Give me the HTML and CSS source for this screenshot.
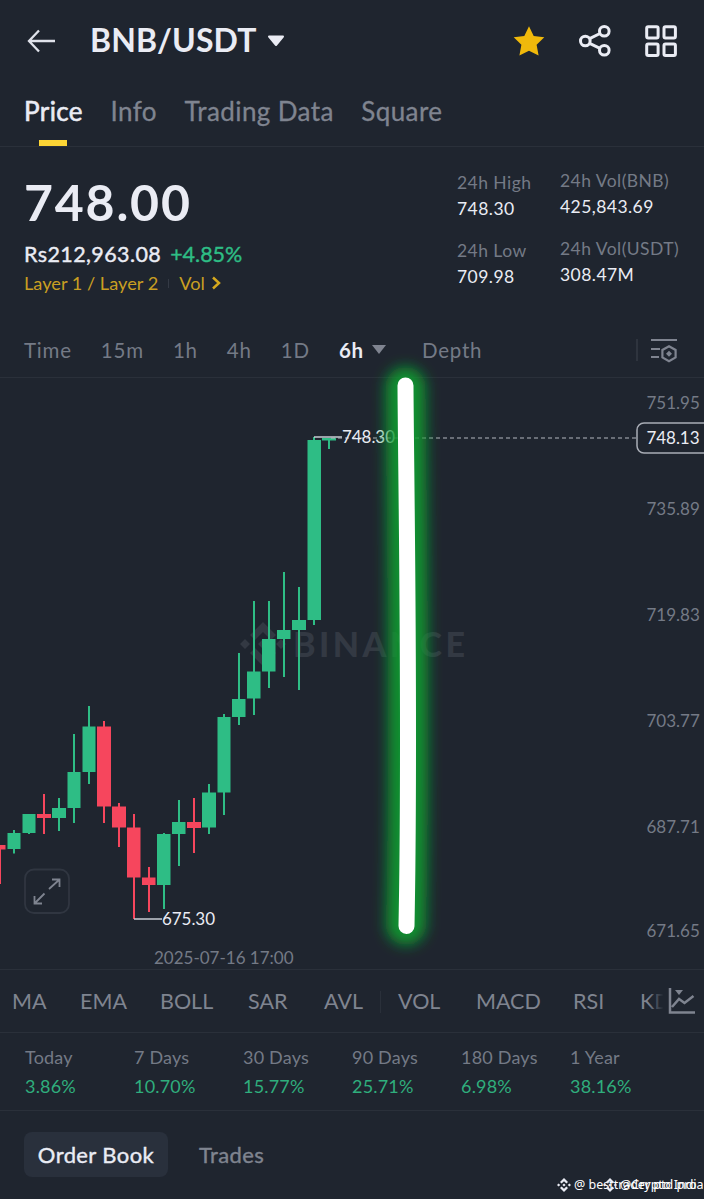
FILE: index.html
```html
<!DOCTYPE html>
<html lang="en">
<head>
  <meta charset="UTF-8" />
  <meta name="viewport" content="width=device-width, initial-scale=1" />
  <title>BNB/USDT</title>
  <link rel="stylesheet" href="styles.css">
</head>
<body>
  <div class="app">
    <header class="topbar">
      <svg class="back" width="30" height="26" viewBox="0 0 30 26"><path d="M29 13H3M13 2.500L3 13l10 10.500" /></svg>
      <h1 class="pair">BNB/USDT</h1>
      <svg class="caret" width="18" height="12" viewBox="0 0 18 12"><path d="M2 1.500h14L9 10z" /></svg>
      <div class="actions">
        <svg width="34" height="34" viewBox="0 0 34 34"><path class="star" d="M17 2.200l4.700 9.700 10.600 1.300-7.700 7.500 2 10.800L17 26.700l-9.600 4.800 2-10.800-7.700-7.500 10.600-1.300z" /></svg>
        <svg class="line-icon" width="34" height="34" viewBox="0 0 34 34"><circle cx="7.300" cy="17" r="4.800" /><circle cx="26.300" cy="7.300" r="4.800" /><circle cx="26.300" cy="26.300" r="4.800" /><path d="M11.600 14.700L22 9.500M11.600 19.300L22 24.300" /></svg>
        <svg class="line-icon" width="34" height="34" viewBox="0 0 34 34"><rect x="2.700" y="2.700" width="11.400" height="11.400" rx="1.500" /><rect x="20" y="2.700" width="11.400" height="11.400" rx="1.500" /><rect x="2.700" y="20" width="11.400" height="11.400" rx="1.500" /><rect x="20" y="20" width="11.400" height="11.400" rx="1.500" /></svg>
      </div>
    </header>

    <nav class="tabs">
      <a class="tab active">Price</a>
      <a class="tab">Info</a>
      <a class="tab">Trading Data</a>
      <a class="tab">Square</a>
    </nav>

    <section class="summary">
      <div class="quote">
        <div class="last-price">748.00</div>
        <div class="fiat"><span class="fiat-value">Rs212,963.08</span><span class="up">+4.85%</span></div>
        <div class="tags">
          <span>Layer 1 / Layer 2</span><i></i><span>Vol</span>
          <svg width="10" height="16" viewBox="0 0 10 16"><path d="M2 2.500L8 8l-6 5.500" /></svg>
        </div>
      </div>
      <dl class="stats high-low">
        <dt>24h High</dt><dd>748.30</dd>
        <dt>24h Low</dt><dd>709.98</dd>
      </dl>
      <dl class="stats volume">
        <dt>24h Vol(BNB)</dt><dd>425,843.69</dd>
        <dt>24h Vol(USDT)</dt><dd>308.47M</dd>
      </dl>
    </section>

    <nav class="intervals">
      <span>Time</span><span>15m</span><span>1h</span><span>4h</span><span>1D</span>
      <span class="selected">6h <svg width="14" height="10" viewBox="0 0 14 10"><path d="M0 0h14L7 9z" /></svg></span>
      <span class="depth">Depth</span>
      <svg class="settings" width="42" height="28" viewBox="0 0 42 28">
        <path class="rule" d="M1 3v22" />
        <path d="M15 4h26M15 13h9M15 21h8" />
        <path d="M33 10.200l6.600 3.800v7.400L33 25.200l-6.600-3.800V14z" />
        <path class="dot" d="M33 14.700l3 3-3 3-3-3z" />
      </svg>
    </nav>

    <section class="chart">
      <svg width="704" height="592" viewBox="0 378 704 592">
        <defs>
          <filter id="glow" x="350" y="330" width="112" height="660" filterUnits="userSpaceOnUse"><feGaussianBlur stdDeviation="7" /></filter>
        </defs>

        <g class="watermark">
          <path d="M263 622l13 13-5 5-8-8-8 8-5-5zM263 666l13-13-5-5-8 8-8-8-5 5zM245 639l5 5-5 5-5-5zM263 639l5 5-5 5-5-5zM281 639l5 5-5 5-5-5z" />
          <text x="293" y="656.500" textLength="172">BINANCE</text>
        </g>

        <g class="down">
          <path class="wick" d="M0 847v37M44 794v40M104 721v102M119 803v44M134 814v105M149 867v45M194 798v55" />
          <path d="M0 845h5.500v4.500H0zM37 814h14v4H37zM97 726.500h14v80H97zM112 806.500h14v21h-14zM127 827.500h13.500v50H127zM142 877.500h13.500v7.500H142zM187 822h14v6h-14z" />
        </g>
        <g class="rise">
          <path class="wick" d="M14 830v23.500M29 814v20M59 798v33M74 734v89M89 706v78M164 833v76M179 800v66M209 784v50M224 714v101M239 653v72M254 601v114M269 601v87M284 572v105M299 587v103M314 437v188M329 438v11" />
          <path d="M7.500 833h13v16h-13zM22.500 814h13v19h-13zM52 808h14v10H52zM67.500 772h13v36h-13zM82.500 726.500h13V772h-13zM157 834h13.500v51H157zM172 822h13.500v12H172zM202 792.500h14v35h-14zM217.500 717h13v75.500h-13zM232 699h13.500v18H232zM247 671.500h13.500v27H247zM262 639h13.500v32.500H262zM277 630h13.500v9H277zM292 620h14v10h-14zM307.500 440h13.500v180h-13.500zM322 438h14v2.500h-14z" />
        </g>

        <path class="leader" d="M314 437h28M134 919h28" />
        <path class="dash" d="M331 438H637" />
        <text class="mark" x="342" y="442.500" textLength="53">748.30</text>
        <text class="mark" x="162" y="924.500" textLength="53">675.30</text>

        <g class="axis">
          <text x="646.500" y="409">751.95</text>
          <text x="646.500" y="515">735.89</text>
          <text x="646.500" y="621">719.83</text>
          <text x="646.500" y="727">703.77</text>
          <text x="646.500" y="833">687.71</text>
          <text x="646.500" y="937">671.65</text>
          <text x="154" y="963.500">2025-07-16 17:00</text>
        </g>
        <rect class="price-box" x="637" y="423" width="80" height="30" rx="7" />
        <text class="mark" x="646.500" y="444" textLength="53">748.13</text>

        <g class="expand">
          <rect x="25" y="869.500" width="44" height="43.500" rx="9" />
          <path d="M49 889l10.500-9.500M52 879.500h7.500v7.500M44.500 893.500L34.500 903.500M34.500 896v7.500h7.500" />
        </g>

        <path class="beam-glow" d="M405.500 387C406 480 411 720 406 925" filter="url(#glow)" />
        <path class="beam" d="M405.500 385.500C406 480 410.500 720 406.500 926" />
      </svg>
    </section>

    <nav class="indicators">
      <span>MA</span><span>EMA</span><span>BOLL</span><span>SAR</span><span>AVL</span>
      <span class="sub">VOL</span><span>MACD</span><span>RSI</span><span class="cut">KD</span>
      <svg width="28" height="28" viewBox="0 0 28 28"><path d="M2 1v24.500h25M4 20l7-8 5.500 4L25.500 9" /><path class="solid" d="M7 3h8l-4 5z" /></svg>
    </nav>

    <section class="periods">
      <div>Today<b>3.86%</b></div>
      <div>7 Days<b>10.70%</b></div>
      <div>30 Days<b>15.77%</b></div>
      <div>90 Days<b>25.71%</b></div>
      <div>180 Days<b>6.98%</b></div>
      <div>1 Year<b>38.16%</b></div>
    </section>

    <footer class="bottom">
      <span class="book">Order Book</span>
      <span class="trades">Trades</span>
      <div class="credit first">
        <svg width="14" height="14" viewBox="0 0 14 14"><path d="M7 0l4 4-1.600 1.600L7 3.200 4.600 5.600 3 4zM7 14l4-4-1.600-1.600L7 10.800 4.600 8.400 3 10zM1.600 5.400L3.200 7 1.600 8.600 0 7zM7 5.400L8.600 7 7 8.600 5.400 7zM12.400 5.400L14 7l-1.600 1.600L10.800 7z" /></svg>
        <span>@ besttrader ptd pro</span>
      </div>
      <div class="credit second">
        <svg width="14" height="14" viewBox="0 0 14 14"><path d="M7 0l4 4-1.600 1.600L7 3.200 4.600 5.600 3 4zM7 14l4-4-1.600-1.600L7 10.800 4.600 8.400 3 10zM1.600 5.400L3.200 7 1.600 8.600 0 7zM7 5.400L8.600 7 7 8.600 5.400 7zM12.400 5.400L14 7l-1.600 1.600L10.800 7z" /></svg>
        <span>@Crypto India</span>
      </div>
    </footer>
  </div>
</body>
</html>
```
FILE: styles.css
```css
* {
  box-sizing: border-box;
}
body {
  margin: 0;
  background: #1f252f;
  color: #eaecf4;
  font-family: Lato, "Liberation Sans", sans-serif;
}
svg {
  display: block;
  flex: none;
}
.app {
  width: 704px;
  height: 1199px;
  overflow: hidden;
}

/* header */
.topbar {
  height: 82px;
  display: flex;
  align-items: center;
  padding: 0 26px 0 26px;
}
.back path {
  fill: none;
  stroke: #dfe2ea;
  stroke-width: 2.3;
}
.pair {
  margin: -2px 0 0 34px;
  font-size: 32px;
  line-height: 40px;
  font-weight: bold;
  letter-spacing: 0.1px;
}
.caret {
  margin-left: 10px;
  fill: #eaecf4;
  stroke: #eaecf4;
  stroke-width: 2;
  stroke-linejoin: round;
}
.actions {
  margin-left: auto;
  display: flex;
  gap: 32px;
}
.star {
  fill: #f0b90b;
}
.line-icon {
  fill: none;
  stroke: #eaecf4;
  stroke-width: 3;
}

.tabs {
  height: 65px;
  display: flex;
  gap: 27.5px;
  padding: 11px 24px 0;
  border-bottom: 1px solid #2a303a;
  font-size: 26px;
  line-height: 36px;
  letter-spacing: 0.4px;
  color: #7f8490;
  -webkit-text-stroke: 0.3px;
}
.tab.active {
  color: #eaecf4;
  -webkit-text-stroke: 0.6px;
}
.tab.active::after {
  content: "";
  display: block;
  width: 28px;
  height: 6px;
  margin: 11px auto 0;
  background: #fcd535;
}

/* price block */
.summary {
  height: 176px;
  display: grid;
  grid-template-columns: 433px 103px 1fr;
  padding-left: 24px;
}
.last-price {
  margin-top: 25px;
  font-size: 50px;
  line-height: 60px;
  font-weight: bold;
  letter-spacing: 1.8px;
}
.fiat {
  display: flex;
  gap: 9px;
  margin-top: 8px;
  font-size: 21.5px;
  line-height: 28px;
  -webkit-text-stroke: 0.4px;
}
.fiat-value {
  letter-spacing: 0.4px;
}
.up {
  color: #2ebd85;
}
.tags {
  display: flex;
  align-items: center;
  margin-top: 2px;
  font-size: 18.2px;
  line-height: 26px;
  color: #c99f22;
}
.tags i {
  width: 1px;
  height: 9px;
  margin: 0 10px;
  background: #343a45;
}
.tags path {
  fill: none;
  stroke: #d5a81d;
  stroke-width: 2.5;
}
.tags svg {
  margin-left: 6px;
}
.stats {
  margin: 0;
  padding-top: 23px;
  font-size: 17.5px;
  line-height: 26px;
  letter-spacing: 0.45px;
}
.stats.volume {
  padding-top: 21px;
}
.stats dt {
  color: #747a86;
}
.stats dd {
  margin: 0 0 15.5px;
}

.intervals {
  height: 55px;
  display: flex;
  align-items: center;
  gap: 29px;
  padding: 0 26px 0 24px;
  border-bottom: 1px solid #2a303a;
  font-size: 20.5px;
  letter-spacing: 0.8px;
  color: #747a86;
}
.selected {
  display: flex;
  align-items: center;
  gap: 8px;
  color: #eaecf4;
  font-weight: bold;
}
.selected svg {
  fill: #7f8490;
}
.depth {
  margin-left: 7px;
}
.settings {
  margin-left: auto;
  fill: none;
  stroke: #7f8490;
  stroke-width: 2.2;
}
.settings .rule {
  stroke: #343a45;
  stroke-width: 1.5;
}
.settings .dot {
  fill: #7f8490;
  stroke: none;
}

/* candles */
.chart {
  position: relative;
  height: 592px;
  border-bottom: 1px solid #2a303a;
}
.chart svg {
  overflow: visible;
}
.watermark {
  fill: #333943;
}
.watermark text {
  font-size: 34px;
  font-weight: 900;
}
.down {
  fill: #f6465d;
  stroke: #f6465d;
  stroke-width: 0;
}
.rise {
  fill: #2ebd85;
  stroke: #2ebd85;
  stroke-width: 0;
}
.wick {
  stroke-width: 2;
}
.leader {
  fill: none;
  stroke: #c8cbd3;
  stroke-width: 1.5;
}
.dash {
  stroke: #b4b8c0;
  stroke-width: 1.2;
  stroke-dasharray: 4 3;
}
.mark {
  font-size: 17px;
  fill: #eaecf4;
}
.axis {
  font-size: 17px;
  fill: #747a86;
}
.price-box {
  fill: #1f252f;
  stroke: #a9adb6;
  stroke-width: 1.5;
}
.expand {
  fill: none;
  stroke: #7f8490;
  stroke-width: 1.8;
}
.expand rect {
  stroke: #303641;
}
.beam-glow {
  fill: none;
  stroke: #0d9a2f;
  stroke-opacity: 0.92;
  stroke-width: 40;
  stroke-linecap: round;
}
.beam {
  fill: none;
  stroke: #fff;
  stroke-width: 16;
  stroke-linecap: round;
}

.indicators {
  height: 63px;
  display: grid;
  grid-template-columns: 68px 80px 88px 76px 74px 78px 97px 67px 28px 28px;
  align-items: center;
  padding-left: 12px;
  border-bottom: 1px solid #2a303a;
  font-size: 21.5px;
  color: #7f8490;
}
.indicators svg {
  fill: none;
  stroke: #7f8490;
  stroke-width: 2.5;
}
.indicators .solid {
  fill: #7f8490;
  stroke: none;
}
.indicators .sub {
  position: relative;
}
.indicators .sub::before {
  content: "";
  position: absolute;
  left: -18px;
  top: 3px;
  width: 1px;
  height: 22px;
  background: #2a303a;
}
.cut {
  position: relative;
}
/* fades the last label out under the chart icon */
.cut::after {
  content: "";
  position: absolute;
  inset: 0 -8px 0 8px;
  background: linear-gradient(90deg, rgba(31, 37, 47, 0), #1f252f 55%);
}
.indicators svg {
  position: relative;
}

.periods {
  height: 78px;
  display: grid;
  grid-template-columns: repeat(6, 109px);
  padding: 10px 0 0 25px;
  border-bottom: 1px solid #2a303a;
  font-size: 18px;
  line-height: 29px;
  letter-spacing: 0.2px;
  color: #747a86;
}
.periods b {
  display: block;
  font-weight: normal;
  color: #2fae7d;
}

.bottom {
  height: 88px;
  position: relative;
  display: flex;
  align-items: flex-start;
  padding: 21px 24px;
  font-size: 22px;
  line-height: 45px;
  letter-spacing: 0.4px;
  -webkit-text-stroke: 0.4px;
}
.book {
  width: 144px;
  text-align: center;
  border-radius: 8px;
  background: #29303c;
}
.trades {
  margin-left: 31px;
  color: #7f8490;
}
.credit {
  position: absolute;
  top: 66px;
  display: flex;
  align-items: center;
  gap: 3px;
  font: 12.5px/16px "Noto Sans", sans-serif;
  letter-spacing: 0;
  -webkit-text-stroke: 0;
  color: #fff;
  white-space: nowrap;
}
.credit svg {
  fill: #eaecf4;
}
.credit.first {
  left: 557px;
}
.credit.second {
  left: 603px;
}
```
